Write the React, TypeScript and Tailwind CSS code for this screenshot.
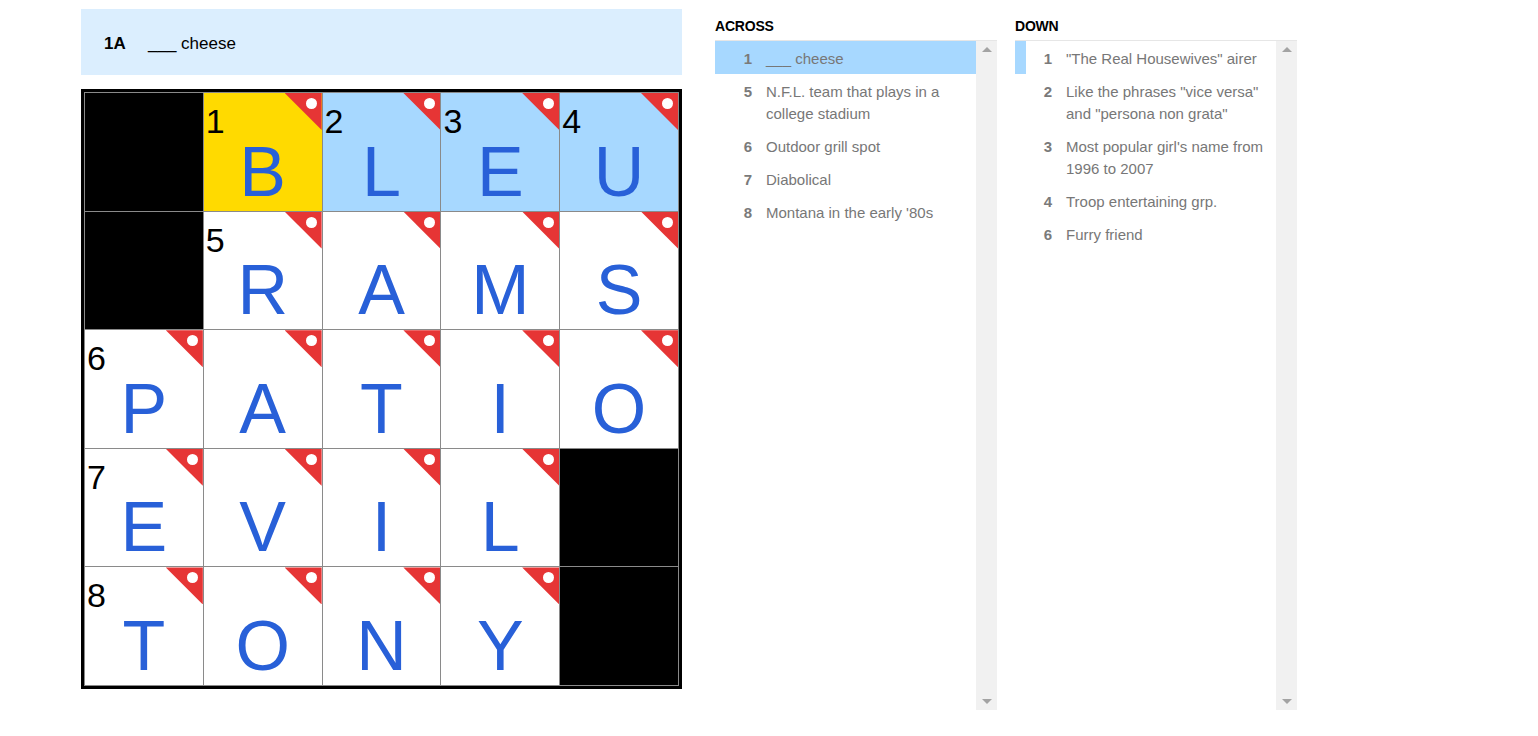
import React from "react";

type Cell = { l: string; n?: number; bg?: string } | null;

const Y = "#ffda00";
const B = "#a7d8ff";

const grid: Cell[][] = [
  [null, { l: "B", n: 1, bg: Y }, { l: "L", n: 2, bg: B }, { l: "E", n: 3, bg: B }, { l: "U", n: 4, bg: B }],
  [null, { l: "R", n: 5 }, { l: "A" }, { l: "M" }, { l: "S" }],
  [{ l: "P", n: 6 }, { l: "A" }, { l: "T" }, { l: "I" }, { l: "O" }],
  [{ l: "E", n: 7 }, { l: "V" }, { l: "I" }, { l: "L" }, null],
  [{ l: "T", n: 8 }, { l: "O" }, { l: "N" }, { l: "Y" }, null],
];

const across = [
  { n: 1, t: "___ cheese", sel: true },
  { n: 5, t: "N.F.L. team that plays in a college stadium" },
  { n: 6, t: "Outdoor grill spot" },
  { n: 7, t: "Diabolical" },
  { n: 8, t: "Montana in the early '80s" },
];

const down = [
  { n: 1, t: "\"The Real Housewives\" airer", cross: true },
  { n: 2, t: "Like the phrases \"vice versa\" and \"persona non grata\"" },
  { n: 3, t: "Most popular girl's name from 1996 to 2007" },
  { n: 4, t: "Troop entertaining grp." },
  { n: 6, t: "Furry friend" },
];

function ClueList({ title, items }: { title: string; items: { n: number; t: string; sel?: boolean; cross?: boolean }[] }) {
  return (
    <div className="flex flex-col w-[282px]">
      <div className="h-[40px] pt-[19px] text-[14px] font-bold text-black leading-none tracking-[-0.2px]">{title}</div>
      <div className="flex h-[670px] border-t border-[#e6e6e6]">
        <div className="flex-1 flex flex-col">
          {items.map((c) => (
            <div
              key={c.n}
              className={`relative flex pt-[7px] pb-[4px] pr-[8px] text-[15px] leading-[22px] ${c.sel ? "bg-[#a7d8ff]" : ""}`}
            >
              {c.cross && <div className="absolute left-0 top-0 bottom-0 w-[11px] bg-[#a7d8ff]" />}
              <div className="w-[37px] shrink-0 text-right font-bold text-[#7a7a7a]">{c.n}</div>
              <div className="pl-[14px] text-[#777777]">{c.t}</div>
            </div>
          ))}
        </div>
        <div className="w-[21px] bg-[#f1f1f1] flex flex-col justify-between items-center py-[6px]">
          <div className="w-0 h-0 border-l-[5px] border-r-[5px] border-b-[5px] border-l-transparent border-r-transparent border-b-[#a3a3a3]" />
          <div className="w-0 h-0 border-l-[5px] border-r-[5px] border-t-[5px] border-l-transparent border-r-transparent border-t-[#a3a3a3]" />
        </div>
      </div>
    </div>
  );
}

export default function App() {
  return (
    <div className="w-[1538px] h-[736px] bg-white flex" style={{ fontFamily: "'Liberation Sans', Arial, sans-serif" }}>
      <div className="ml-[81px] mt-[9px] flex flex-col w-[601px]">
        <div className="h-[66px] bg-[#dbeefe] flex items-center pt-[4px] pl-[23px] text-[17px]">
          <span className="font-bold text-black w-[44px]">1A</span>
          <span className="text-black">___ cheese</span>
        </div>
        <div className="mt-[14px] w-[601px] h-[600px] border-[3px] border-black bg-[#8a8a8a] p-px grid grid-cols-5 grid-rows-5 gap-px">
          {grid.flat().map((c, i) =>
            c === null ? (
              <div key={i} className="bg-black" />
            ) : (
              <div key={i} className="relative overflow-hidden" style={{ background: c.bg ?? "#ffffff" }}>
                <div className="absolute top-0 right-0 w-[37px] h-[37px] bg-[#e63535] [clip-path:polygon(0_0,100%_0,100%_100%)]" />
                <div className="absolute top-[5px] right-[5px] w-[11px] h-[11px] rounded-full bg-white" />
                {c.n !== undefined && (
                  <div className="absolute top-[11px] left-[2px] text-[34px] leading-none text-black">{c.n}</div>
                )}
                <div className="absolute left-0 right-0 bottom-[4px] text-center text-[70px] leading-none text-[#2860d8]">{c.l}</div>
              </div>
            )
          )}
        </div>
      </div>
      <div className="ml-[33px] flex gap-[18px]">
        <ClueList title="ACROSS" items={across} />
        <ClueList title="DOWN" items={down} />
      </div>
    </div>
  );
}
